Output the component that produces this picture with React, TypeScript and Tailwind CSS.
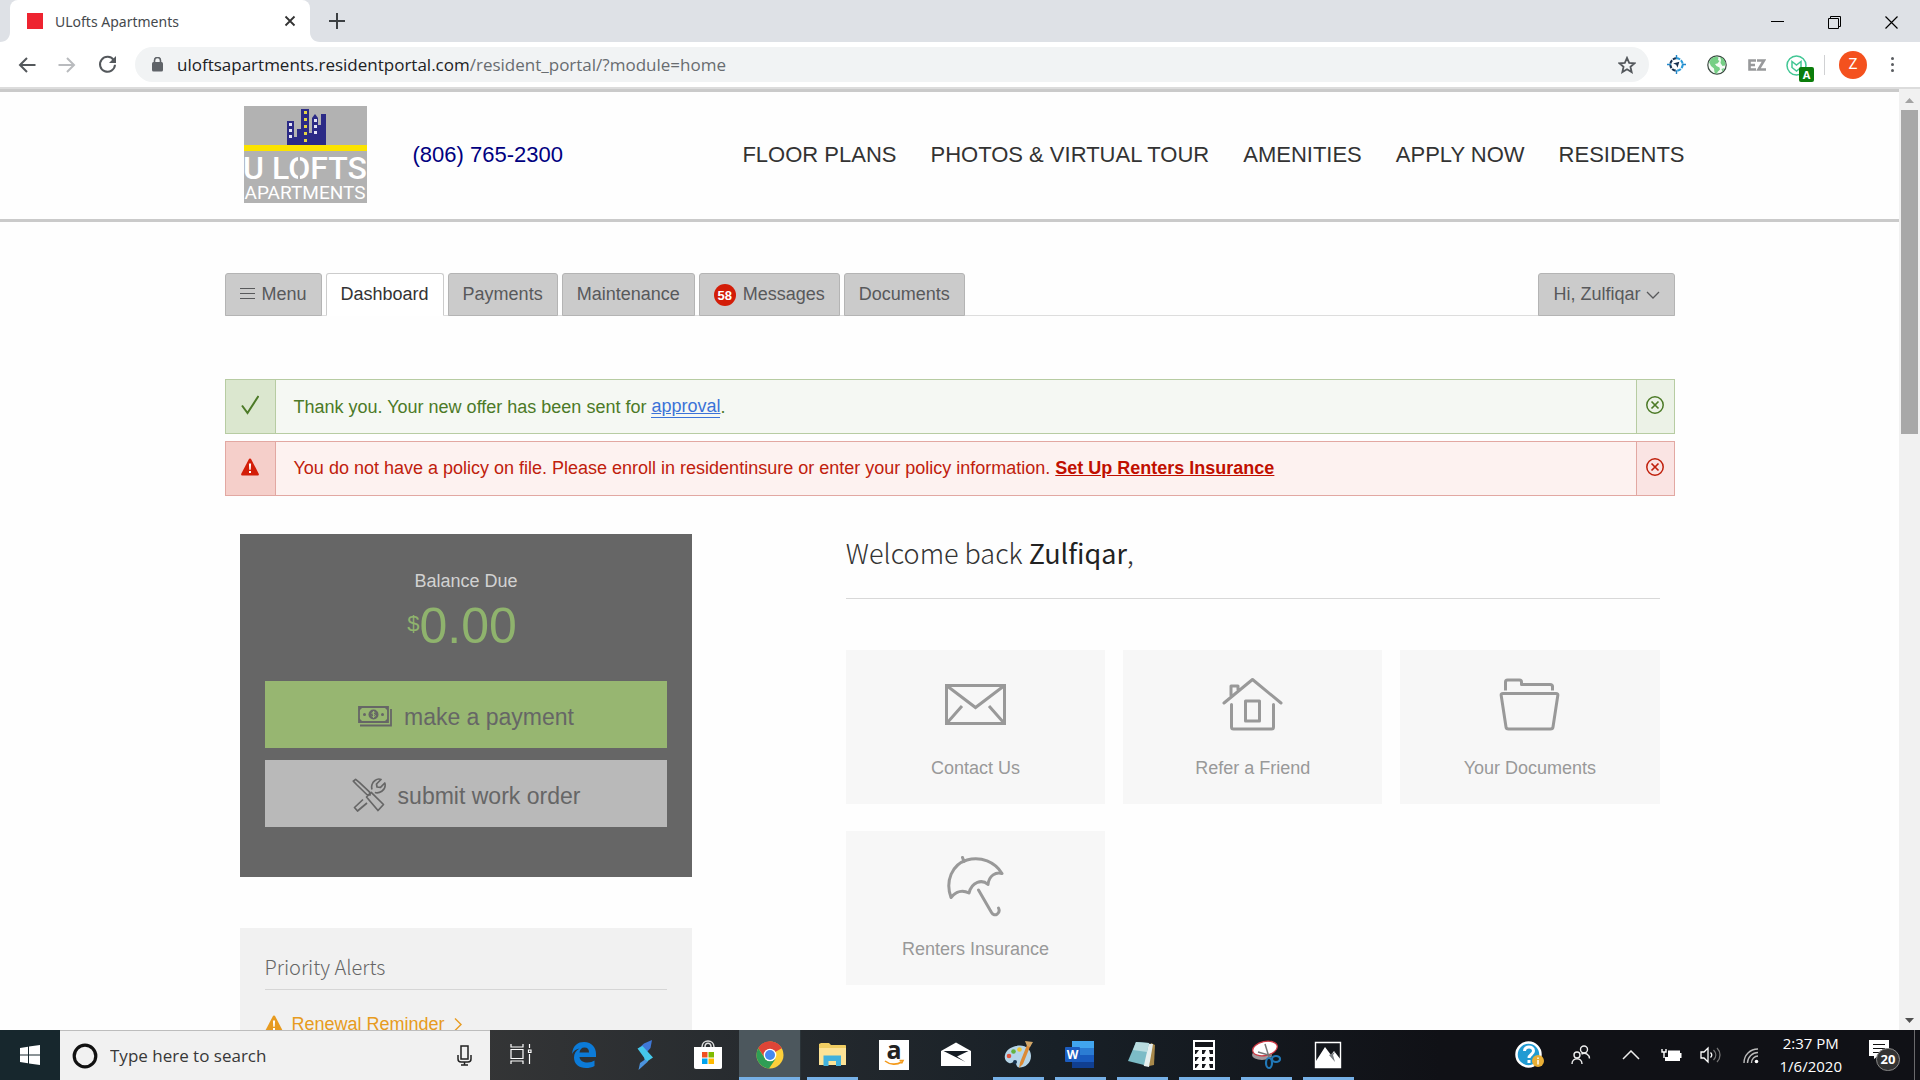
import React from "react";
import { clsx } from "clsx";

/* ---------- browser window ---------- */

function TabFoot({ flip }: { flip?: boolean }) {
  return (
    <svg width="10" height="10" viewBox="0 0 10 10" className={clsx("shrink-0", flip && "-scale-x-100")} aria-hidden="true">
      <path d="M10 0v10H0C6 10 10 6 10 0Z" fill="#fff" />
    </svg>
  );
}

function TabStrip() {
  return (
    <div className="flex h-[42px] shrink-0 items-end justify-between bg-[#dee1e6]">
      <div className="flex items-end">
        <TabFoot />
        <div className="flex h-[42px] w-[300px] items-center rounded-t-lg bg-white pl-[17px] pr-[11px]">
          <span className="h-4 w-4 bg-[#ee2430]" />
          <span className="ml-3 flex-1 whitespace-nowrap text-[14px] text-[#45494d]">ULofts Apartments</span>
          <button aria-label="Close tab" className="p-[3px] text-[#333]">
            <svg width="12" height="12" viewBox="0 0 12 12" stroke="currentColor" strokeWidth="1.8" aria-hidden="true">
              <path d="M1.5 1.5l9 9M10.5 1.5l-9 9" />
            </svg>
          </button>
        </div>
        <TabFoot flip />
        <button aria-label="New tab" className="ml-[9px] flex h-[42px] items-center text-[#3c4043]">
          <svg width="16" height="16" viewBox="0 0 16 16" stroke="currentColor" strokeWidth="2" aria-hidden="true">
            <path d="M8 0v16M0 8h16" />
          </svg>
        </button>
      </div>
      <div className="flex h-[36px] text-black">
        <button aria-label="Minimize" className="grid w-[57px] place-items-center pb-1">
          <svg width="13" height="14" stroke="currentColor" aria-hidden="true"><path d="M0 6.500h13" /></svg>
        </button>
        <button aria-label="Restore" className="grid w-[57px] place-items-center pb-1">
          <svg width="13" height="13" fill="none" stroke="currentColor" aria-hidden="true">
            <path d="M.5 2.500h10v10h-10zM2.500 2.500v-2h10v10h-2" />
          </svg>
        </button>
        <button aria-label="Close" className="grid w-[57px] place-items-center pb-1">
          <svg width="13" height="13" stroke="currentColor" strokeWidth="1.200" aria-hidden="true">
            <path d="M.5.5l12 12M12.500.5l-12 12" />
          </svg>
        </button>
      </div>
    </div>
  );
}

function Arrow({ flip }: { flip?: boolean }) {
  return (
    <svg width="18" height="16" viewBox="0 0 18 16" fill="none" stroke="currentColor" strokeWidth="2" className={clsx(flip && "-scale-x-100")} aria-hidden="true">
      <path d="M17.500 8H2M9 1L2 8l7 7" />
    </svg>
  );
}

function Toolbar() {
  return (
    <div className="flex h-[45px] shrink-0 items-center bg-white pl-[18px] text-[#54585c]">
      <button aria-label="Back"><Arrow /></button>
      <button aria-label="Forward" className="ml-[22px] text-[#b9bbbe]"><Arrow flip /></button>
      <button aria-label="Reload" className="ml-[22px]">
        <svg width="19" height="19" viewBox="0 0 19 19" fill="none" stroke="currentColor" strokeWidth="2" aria-hidden="true">
          <path d="M15.800 5.200A7.500 7.500 0 1 0 17 9.800" />
          <path d="M18 1v7h-7z" fill="currentColor" stroke="none" />
        </svg>
      </button>
      <div className="relative ml-[18px] flex h-[35px] flex-1 items-center rounded-full bg-[#f1f3f4] pl-[17px] pr-[13px]">
        <svg width="11" height="15" viewBox="0 0 11 15" aria-hidden="true">
          <rect y="5" width="11" height="9.500" rx="1.500" fill="#5f6368" />
          <path d="M2.500 6V3.500a3 3 0 0 1 6 0V6" fill="none" stroke="#5f6368" strokeWidth="1.600" />
        </svg>
        <span className="ml-[14px] flex-1 whitespace-nowrap font-['Open_Sans',sans-serif] text-[17px] text-[#202124]">
          uloftsapartments.residentportal.com<span className="text-[#686c70]">/resident_portal/?module=home</span>
        </span>
        <input aria-label="Address and search bar" className="absolute inset-0 rounded-full bg-transparent outline-none" />
        <svg width="18" height="18" viewBox="0 0 24 24" fill="none" stroke="currentColor" strokeWidth="2.400" aria-hidden="true">
          <path d="M12 2.500l2.900 6.600 7.100.6-5.400 4.700 1.600 7L12 17.700l-6.200 3.700 1.600-7L2 9.700l7.100-.6z" />
        </svg>
      </div>
      <div className="flex items-center">
        <svg width="19" height="19" viewBox="0 0 20 20" className="ml-[18px]" fill="none" strokeWidth="2.200" aria-hidden="true">
          <path d="M10 3.500a6.500 6.500 0 0 0 0 13" stroke="#17304f" strokeDasharray="4 1" />
          <path d="M10 3.500a6.500 6.500 0 0 1 0 13" stroke="#2a9bd8" strokeDasharray="4 1" />
          <path d="M10 0v4M10 16v4M16 10h4M0 10h4" stroke="#2187c9" strokeWidth="1.500" />
          <path d="M13 7l-2 6.500-1.300-3.200L6.500 9z" fill="#17304f" />
        </svg>
        <svg width="20" height="20" viewBox="0 0 20 20" className="ml-[21px]" aria-hidden="true">
          <circle cx="10" cy="10" r="9.200" fill="#f4fbf5" stroke="#3b4a42" strokeWidth="1.200" />
          <path d="M2 7L5 3l4-1.500 2.500 1-.5 2.500 1.500 1-2 2.500-2.500.5L9.500 11l3 1.500.5 2-2.500 2.500-.5 2-2.500-1.500-.5-4L4 11zM13 2l3 1.500 2.500 4-.5 3-2.500.5-2-3 .5-3zM14.500 14l3-1-2 4z" fill="#75cf85" />
        </svg>
        <svg width="18" height="12" viewBox="0 0 18 12" className="ml-[21px]" fill="none" stroke="#98999b" strokeWidth="2.600" aria-hidden="true">
          <path d="M8 1.500H1.500v9H8M1.500 6H7M9 1.500h7L10.500 10.500H18" />
        </svg>
        <div className="relative ml-[20px] h-[20px] w-[28px]">
          <svg width="22" height="22" viewBox="0 0 22 22" fill="none" stroke="#42c795" strokeWidth="1.500" aria-hidden="true">
            <circle cx="10.500" cy="10.500" r="9.500" />
            <path d="M6 6.500l4.500 3.500L15 6.500v6L10.500 16 6 12.500z" />
          </svg>
          <span className="absolute left-[13px] top-[12px] grid h-[15px] w-[15px] place-items-center rounded-[2px] bg-[#0b7d0b] text-[11px] font-bold leading-none text-white">A</span>
        </div>
        <span className="ml-[10px] h-[20px] w-px bg-[#d0d1d3]" />
        <button aria-label="Profile" className="ml-[14px] grid h-[28px] w-[28px] place-items-center rounded-full bg-[#f4511e] font-[Roboto] text-[15px] text-white">Z</button>
        <button aria-label="Browser menu" className="ml-[24px] mr-[26px] flex flex-col gap-[3px]">
          <span className="h-[3px] w-[3px] rounded-full bg-[#5a5d61]" />
          <span className="h-[3px] w-[3px] rounded-full bg-[#5a5d61]" />
          <span className="h-[3px] w-[3px] rounded-full bg-[#5a5d61]" />
        </button>
      </div>
    </div>
  );
}

function Scrollbar() {
  return (
    <div className="flex w-[21px] shrink-0 flex-col items-center bg-[#f1f1f1]">
      <svg width="21" height="21" aria-hidden="true"><path d="M6 14h9l-4.500-5z" fill="#a3a3a3" /></svg>
      <div className="h-[324px] w-[17px] bg-[#a8a8a8]" />
      <div className="flex-1" />
      <svg width="21" height="21" aria-hidden="true"><path d="M6 9h9l-4.500 5z" fill="#505050" /></svg>
    </div>
  );
}

/* ---------- resident portal ---------- */

function Logo() {
  return (
    <svg width="123" height="97" viewBox="0 0 123 97" role="img" aria-label="U Lofts Apartments">
      <rect width="123" height="97" fill="#b2b2b2" />
      <path d="M43 40V15h7v16h3v-8h4V3h8v24h3V12l3-4 3 4v7h3V8h5v32z" fill="#2b2a86" />
      <path d="M45 17h3v3h-3zm0 6h3v3h-3zm0 6h3v3h-3zM70 13h3v3h-3zm0 6h3v3h-3zm0 6h3v3h-3z" fill="#e4e4f6" />
      <path d="M60 5h3v3h-3zm0 7h3v3h-3zm0 7h3v3h-3zm0 7h3v3h-3zm0 7h3v3h-3z" fill="#e5d545" />
      <rect y="39" width="123" height="6" fill="#fbe300" />
      <text x="61" y="73" textAnchor="middle" fill="#fff" className="font-[Roboto] text-[32px] font-medium">U LOFTS</text>
      <path d="M55 48v27" stroke="#b2b2b2" strokeWidth="2" />
      <text x="61" y="93" textAnchor="middle" fill="#fff" className="font-[Roboto] text-[19px]">APARTMENTS</text>
    </svg>
  );
}

const siteLinks = ["FLOOR PLANS", "PHOTOS & VIRTUAL TOUR", "AMENITIES", "APPLY NOW", "RESIDENTS"];

function SiteHeader() {
  return (
    <header className="border-y-[3px] border-[#cacaca]">
      <div className="mx-auto flex h-[127px] max-w-[1470px] items-center pb-[2px]">
        <a href="#home" className="ml-[29px]"><Logo /></a>
        <a href="tel:8067652300" className="ml-[46px] text-[22px] text-[#000080]">(806) 765-2300</a>
        <nav className="ml-auto flex gap-[34px] text-[22px] text-[#333]">
          {siteLinks.map((l) => (
            <a key={l} href="#site" className="whitespace-nowrap">{l}</a>
          ))}
        </nav>
      </div>
    </header>
  );
}

function PortalTab({ children, active }: { children: React.ReactNode; active?: boolean }) {
  return (
    <a
      href="#tab"
      className={clsx(
        "-mb-px flex h-[43px] items-center whitespace-nowrap rounded-t-[3px] border px-[14px] pb-[2px]",
        active ? "border-[#ccc] border-b-white bg-white text-[#333]" : "border-[#b4b4b4] bg-[#cbcbcb] text-[#58595b]",
      )}
    >
      {children}
    </a>
  );
}

function PortalNav() {
  return (
    <nav className="flex items-end gap-1 border-b border-[#ddd] text-lg">
      <PortalTab>
        <svg width="15" height="11" className="mr-[7px]" stroke="currentColor" aria-hidden="true">
          <path d="M0 .5h15M0 5.500h15M0 10.500h15" />
        </svg>
        Menu
      </PortalTab>
      <PortalTab active>Dashboard</PortalTab>
      <PortalTab>Payments</PortalTab>
      <PortalTab>Maintenance</PortalTab>
      <PortalTab>
        <span className="mr-[7px] mt-[3px] grid h-[22px] w-[22px] place-items-center rounded-full bg-[#d31d08] text-[13px] font-bold leading-none text-white">58</span>
        Messages
      </PortalTab>
      <PortalTab>Documents</PortalTab>
      <span className="flex-1" />
      <PortalTab>
        Hi, Zulfiqar
        <svg width="14" height="8" className="ml-[5px] mt-[2px]" fill="none" stroke="currentColor" strokeWidth="1.300" aria-hidden="true">
          <path d="M1 1l6 6 6-6" />
        </svg>
      </PortalTab>
    </nav>
  );
}

function CloseCircle() {
  return (
    <svg width="18" height="18" viewBox="0 0 18 18" fill="none" stroke="currentColor" strokeWidth="1.500" className="-mt-[4px]" aria-hidden="true">
      <circle cx="9" cy="9" r="8.200" />
      <path d="M5.500 5.500l7 7M12.500 5.500l-7 7" strokeWidth="1.700" />
    </svg>
  );
}

function Warning({ size }: { size: number }) {
  return (
    <svg width={size} height={size} viewBox="0 0 18 18" aria-hidden="true">
      <path d="M9 .5c.7 0 1 .4 1.300.9l7.300 14.100c.6 1.200.1 2-1.100 2h-15c-1.200 0-1.700-.8-1.100-2L7.700 1.400C8 .9 8.300.5 9 .5Z" fill="currentColor" />
      <path d="M7.900 5.500h2.200l-.4 6.300H8.300zM8 13h2v2H8z" fill="#fff" />
    </svg>
  );
}

function Notices() {
  return (
    <div className="mt-[63px] flex flex-col gap-[7px] text-lg">
      <div className="flex h-[55px] border border-[#b7cca2] bg-[#f5f8f3] text-[#4c7a27]">
        <div className="grid w-[50px] place-items-center border-r border-[#b7cca2] bg-[#dbe7cf] pb-[3px]">
          <svg width="18" height="20" viewBox="0 0 18 20" fill="none" stroke="currentColor" strokeWidth="2" aria-hidden="true">
            <path d="M1 10.500l5.500 7.500L17.500 1" />
          </svg>
        </div>
        <p className="flex flex-1 items-center whitespace-pre px-[18px]">
          Thank you. Your new offer has been sent for{" "}
          <a href="#approval" className="border-b border-[#3b73d8] leading-[21px] text-[#3b73d8] underline">approval</a>.
        </p>
        <button aria-label="Dismiss confirmation" className="grid w-[38px] place-items-center border-l border-[#b7cca2] bg-[#ecf2e7]"><CloseCircle /></button>
      </div>
      <div className="flex h-[55px] border border-[#e2a8a2] bg-[#fdf2f0] text-[#c0200c]">
        <div className="grid w-[50px] place-items-center border-r border-[#e2a8a2] bg-[#f5cfca] pb-[3px] text-[#d31d08]"><Warning size={18} /></div>
        <p className="flex flex-1 items-center whitespace-pre px-[18px] pb-[2px]">
          You do not have a policy on file. Please enroll in residentinsure or enter your policy information.{" "}
          <a href="#insurance" className="font-bold text-[#c00f00] underline">Set Up Renters Insurance</a>
        </p>
        <button aria-label="Dismiss warning" className="grid w-[38px] place-items-center border-l border-[#e2a8a2] bg-[#fae4e3]"><CloseCircle /></button>
      </div>
    </div>
  );
}

function BalanceCard() {
  return (
    <section className="flex flex-col bg-[#666] px-[25px] pb-[50px] pt-[33px]">
      <h2 className="text-center text-lg leading-[28px] text-[#d2d2d2]">Balance Due</h2>
      <p className="mr-2 flex justify-center text-[#8fb36d]">
        <span className="text-[22px] leading-[57px]">$</span>
        <span className="text-[50px] leading-[63px]">0.00</span>
      </p>
      <button className="mt-[23px] flex h-[67px] items-center justify-center gap-3 bg-[#97b671] pt-[3px] text-[23px] text-[#666]">
        <svg width="34" height="21" viewBox="0 0 34 21" aria-hidden="true">
          <path d="M1 1h29v15H1z" fill="none" stroke="currentColor" strokeWidth="1.800" />
          <path d="M33 3v16.500H2" fill="none" stroke="currentColor" strokeWidth="1.800" />
          <path d="M1 1h4L1 5zM30 1h-4l4 4zM1 16h4l-4-4zM30 16h-4l4-4z" fill="currentColor" />
          <circle cx="15.500" cy="8.500" r="5" fill="currentColor" />
          <circle cx="6.500" cy="8.500" r="1.500" fill="currentColor" />
          <circle cx="24.500" cy="8.500" r="1.500" fill="currentColor" />
          <path d="M17.300 6.800c-.6-1-3.400-1-3.400.4 0 1.600 3.500.8 3.500 2.500 0 1.500-3 1.400-3.700.3M15.500 5v7" fill="none" stroke="#97b671" />
        </svg>
        <span className="pt-[2px]">make a payment</span>
      </button>
      <button className="mt-3 flex h-[67px] items-center justify-center gap-3 bg-[#b9b9b9] pt-[3px] text-[23px] text-[#666]">
        <svg width="34" height="34" viewBox="0 0 34 34" fill="none" stroke="currentColor" strokeWidth="1.700" strokeLinejoin="round" aria-hidden="true">
          <path d="M1.300 3.200l2.300-1.900 4 3.300 9.800 9.300.7 3.100-3.300-.5L5 7z" />
          <path d="M14.500 19l4.700-4.700L31.500 26.500 26 32.500z" />
          <path d="M11 21.500l-8.500 8 3 3.500 9.500-8M20 11.500c-1-3 0-7 3-9 2-1.500 4-2 6-1l-4.500 4.500.5 3 3.500.3L32.800 5c1 3-.3 6.500-3 8.300-2.300 1.500-4.800 1.900-7 1.200" />
        </svg>
        <span className="pt-[2px]">submit work order</span>
      </button>
    </section>
  );
}

function PriorityAlerts() {
  return (
    <section className="mt-[51px] h-[200px] bg-[#f1f1f1] px-[25px] pt-[21px]">
      <h2 className="border-b border-[#d6d6d6] pb-[5px] font-['Noto_Sans_CJK_SC',sans-serif] text-[20px] font-light leading-[35px] text-[#666]">Priority Alerts</h2>
      <a href="#renewal" className="mt-[22px] flex items-center text-lg leading-[24px] text-[#e79b20]">
        <Warning size={18} />
        <span className="ml-[9px]">Renewal Reminder</span>
        <svg width="8" height="13" viewBox="0 0 8 13" className="ml-[9px]" fill="none" stroke="currentColor" strokeWidth="1.400" aria-hidden="true">
          <path d="M1 .5l6 6-6 6" />
        </svg>
      </a>
    </section>
  );
}

const tiles: { label: string; icon: React.ReactNode }[] = [
  {
    label: "Contact Us",
    icon: <path d="M1.500 10.500h58v38h-58zM1.500 10.500l29 22 29-22M2 48l15-17M59 48L44 31" />,
  },
  {
    label: "Refer a Friend",
    icon: (
      <path
        strokeLinejoin="round"
        strokeLinecap="round"
        d="M2 28L30.500 4.500 59 28M9 20.500V11h7V14.500M9.500 29.500V52c0 1.500.5 2 2 2h38c1.500 0 2-.5 2-2V29.500M23.500 26h14v20h-14z"
      />
    ),
  },
  {
    label: "Your Documents",
    icon: (
      <path
        strokeLinejoin="round"
        d="M6.500 15.500V7c0-1.500.5-2 2-2h12c1.500 0 2 .5 2 2V9.500H51c1.500 0 2.500.5 2.500 2v4M4 18.500h53c1.500 0 2 .8 1.800 2L54 52c-.2 1.500-1 2-2.500 2H9.500c-1.500 0-2.300-.5-2.500-2L2.200 20.500c-.2-1.200.3-2 1.800-2Z"
      />
    ),
  },
  {
    label: "Renters Insurance",
    icon: (
      <path
        strokeLinejoin="round"
        strokeLinecap="round"
        d="M17.500 1.500l1.500 4M6 41.500C0 25 7 8.500 22 4c14-4 28 2 35 13.500-6-2-13 2-14 11-6-5.500-16-3-19 8.500-6-3-13-2-18 4.500ZM33.500 34l13 22.500c3 5 9.500 1 7-4.500"
      />
    ),
  },
];

function Welcome() {
  return (
    <section className="w-[57.3%]">
      <h1 className="-mt-[3px] border-b border-[#d8d8d8] pb-[24px] font-['Noto_Sans_CJK_SC',sans-serif] text-[27px] font-light leading-[43px] text-[#333]">
        Welcome back <span className="font-normal text-[#222]">Zulfiqar</span>,
      </h1>
      <div className="mt-[51px] grid grid-cols-3 gap-x-[18px] gap-y-[27px]">
        {tiles.map((t) => (
          <a key={t.label} href="#tile" className="flex h-[154px] flex-col items-center bg-[#f7f7f7] pt-[25px] text-lg text-[#999]">
            <svg width="61" height="61" viewBox="0 0 61 61" fill="none" stroke="currentColor" strokeWidth="3" aria-hidden="true">{t.icon}</svg>
            <span className="mt-[18px]">{t.label}</span>
          </a>
        ))}
      </div>
    </section>
  );
}

/* ---------- taskbar ---------- */

const apps: { name: string; state: "none" | "open" | "active"; icon: React.ReactNode }[] = [
  {
    name: "Task View",
    state: "none",
    icon: <path d="M4 9.500h12v9H4zM4 4v3h12V4M4 24v-3h12v3M22.500 4v4M22.500 14v10M21.500 10h2.500v2.500h-2.500z" fill="none" stroke="#fff" strokeWidth="1.200" />,
  },
  {
    name: "Edge",
    state: "none",
    icon: <path d="M3 14C4 5 9 2 15 2c8 0 12 6 12 12v3H10.500c.5 4 4 5.500 8 5.500 3 0 5-.8 7-2v5.500c-2.500 1.500-5.500 2-8.500 2-7 0-12-4-12-10.500 0-4 2-7 5.500-9C7 9 4.500 11 3 14Zm7.500-1.500H20c0-3.500-1.500-5-4.500-5s-4.600 2-5 5Z" fill="#0c7bd8" />,
  },
  {
    name: "Streams",
    state: "none",
    icon: (
      <>
        <path d="M21 0l-1.500 8-3.500 4-8-4 5-4.500z" fill="#3f78d8" />
        <path d="M6.500 8.500l5-2.500L22 17.500l-7.500 5-1.500-5z" fill="#45c8ea" />
        <path d="M7.500 30L9 23l5-3.500 3 2z" fill="#4c93de" />
      </>
    ),
  },
  {
    name: "Store",
    state: "none",
    icon: (
      <>
        <path d="M9 7c0-8 12-8 12 0M12 7c0-5 6-5 6 0" fill="none" stroke="#ddd" strokeWidth="1.500" />
        <path d="M1 7h28v20c0 1-.5 2-2 2H3c-1.500 0-2-1-2-2z" fill="#fff" />
        <path d="M9 12h5.500v5.500H9z" fill="#f05022" />
        <path d="M15.500 12H21v5.500h-5.500z" fill="#7fba00" />
        <path d="M9 18.500h5.500V24H9z" fill="#00a4ef" />
        <path d="M15.500 18.500H21V24h-5.500z" fill="#ffb900" />
      </>
    ),
  },
  {
    name: "Chrome",
    state: "active",
    icon: (
      <>
        <circle cx="15" cy="15" r="13.500" fill="#fdcf3a" />
        <path d="M15 15L3.300 8.200A13.500 13.500 0 0 1 26.700 8.200z" fill="#de4537" />
        <path d="M15 8.200h11.700A13.500 13.500 0 0 0 3.300 8.200l6 9z" fill="#de4537" />
        <path d="M3.300 8.200A13.500 13.500 0 0 0 14 28.500l6.500-9.500-9.500 1z" fill="#2f9e55" />
        <circle cx="15" cy="15" r="6.300" fill="#fff" />
        <circle cx="15" cy="15" r="5" fill="#4688f0" />
      </>
    ),
  },
  {
    name: "File Explorer",
    state: "open",
    icon: (
      <>
        <path d="M2 4l2-1h8l2 2h14c.6 0 1 .4 1 1v19H2z" fill="#f0cd62" />
        <path d="M2 8h27v17H2z" fill="#fde396" />
        <path d="M6.500 26V15.500h17.500V26h-5v-5h-7.500v5z" fill="#41b1dd" />
      </>
    ),
  },
  {
    name: "Amazon",
    state: "none",
    icon: (
      <>
        <path d="M0 0h30v30H0z" fill="#fff" />
        <text x="15" y="19" textAnchor="middle" fill="#222" className="font-['Open_Sans'] text-[25px] font-bold">a</text>
        <path d="M6 21c5 4 12 4 16.500 1M20.500 20.500h3.500l-1.500 3" fill="none" stroke="#f49a1a" strokeWidth="1.600" />
      </>
    ),
  },
  {
    name: "Mail",
    state: "none",
    icon: (
      <>
        <path d="M0 11L15 2.500 30 11v15H0z" fill="#fff" />
        <path d="M2.500 11h25L16 16.500l8.500 5.500z" fill="#141b23" />
      </>
    ),
  },
  {
    name: "Paint",
    state: "open",
    icon: (
      <>
        <path d="M13 6c9-2 15 3 15 10 0 8-7 12-12 11.500-3-.5-2-3.500-4-5s-3 1.500-6 .5c-3-1-5-4-4-8 1-5 6-8 11-9Z" fill="#b5d5e8" />
        <circle cx="6" cy="16" r="2.300" fill="#e0533c" />
        <circle cx="10.500" cy="11.500" r="2.300" fill="#63b23e" />
        <circle cx="16.500" cy="9.500" r="2.300" fill="#efc430" />
        <circle cx="12" cy="22" r="2" fill="#17324d" />
        <path d="M28.500 3L20 24l-4 4 1-5.500L24 5z" fill="#dc8a35" />
        <path d="M22 1l8 1-3 5-3-1z" fill="#d1a668" />
      </>
    ),
  },
  {
    name: "Word",
    state: "open",
    icon: (
      <>
        <path d="M7 1h22v7H7z" fill="#41a5ee" />
        <path d="M7 8h22v7H7z" fill="#2b7cd3" />
        <path d="M7 15h22v7H7z" fill="#185abd" />
        <path d="M7 22h22v6H7z" fill="#103f91" />
        <rect y="7" width="15" height="15" rx="1" fill="#1b5cbf" />
        <text x="7.500" y="19" textAnchor="middle" fill="#fff" className="font-['Open_Sans'] text-[12px] font-bold">W</text>
      </>
    ),
  },
  {
    name: "Notepad",
    state: "open",
    icon: (
      <>
        <path d="M24 3l4 2-1 20-5 1z" fill="#a8884a" />
        <path d="M10 3l16 1-4 23-5-1z" fill="#e6efef" />
        <path d="M9 2l13 1-5 22L1 21z" fill="#7cbcc7" />
        <path d="M9 2l13 1-2 9L6 10z" fill="#b9dce0" />
      </>
    ),
  },
  {
    name: "Calculator",
    state: "open",
    icon: (
      <>
        <path d="M4 0h22v30H4z" fill="#fff" />
        <path d="M6 2h18v5H6zM6 10h4l-3 4H6zM13 10h4l-2 4h-2zM20 10h4v4h-3zM6 17h4l-3 4H6zM13 17h4l-2 4h-2zM20 17h4v4h-3zM6 24h4l-3 4H6zM13 24h4l-2 4h-2zM20 24h4v4h-3z" fill="#15161b" />
      </>
    ),
  },
  {
    name: "Snipping Tool",
    state: "open",
    icon: (
      <>
        <ellipse cx="11" cy="15" rx="10" ry="5" fill="#a1999c" />
        <ellipse cx="14" cy="8.500" rx="12.500" ry="7" fill="#fff" stroke="#cf3b46" strokeWidth="1.300" transform="rotate(-12 14 8.500)" />
        <path d="M14 4l4 13M7 12l14 4" stroke="#777" strokeWidth="1.500" />
        <ellipse cx="18" cy="23" rx="3" ry="5" fill="none" stroke="#2179b9" strokeWidth="2.200" />
        <ellipse cx="25" cy="19" rx="4" ry="3" fill="none" stroke="#2179b9" strokeWidth="2.200" />
      </>
    ),
  },
  {
    name: "Photos",
    state: "open",
    icon: (
      <>
        <path d="M2.500 2.500h25v25h-25z" fill="none" stroke="#fff" strokeWidth="1.400" />
        <path d="M3 21l9-14 6 8 3-4 7 9v7H3z" fill="#fff" />
        <path d="M16 15l6 7-2-7 2-3z" fill="#777b80" />
      </>
    ),
  },
];

function Taskbar() {
  return (
    <footer className="flex h-[50px] shrink-0 items-stretch bg-linear-to-r from-[#343536] from-25% via-[#182027] via-55% to-[#101116] to-75% text-white">
      <button aria-label="Start" className="grid w-[60px] place-items-center bg-[#17272d]">
        <svg width="20" height="20" fill="#fff" aria-hidden="true">
          <path d="M0 3l8-1.200V9.500H0zM9 1.600L20 0v9.500H9zM0 10.500h8v7.700L0 17zM9 10.500h11V20L9 18.400z" />
        </svg>
      </button>
      <label className="mr-px flex w-[430px] items-center border-t border-[#bdbdbd] bg-[#f1f1f1] pl-[12px] pr-[18px]">
        <svg width="26" height="26" aria-hidden="true"><circle cx="13" cy="13" r="10.800" fill="none" stroke="#111" strokeWidth="3.200" /></svg>
        <input type="text" aria-label="Search Windows" placeholder="Type here to search" className="ml-[12px] min-w-0 flex-1 bg-transparent font-['Open_Sans',sans-serif] text-[17px] text-[#333] outline-none placeholder:text-[#383838]" />
        <svg width="15" height="21" viewBox="0 0 15 21" fill="none" stroke="#222" strokeWidth="1.500" aria-hidden="true">
          <path d="M4 1h7v13H4zM1 10v4c0 2 1 3 3 3h7c2 0 3-1 3-3v-4M7.500 17v3M4 20h7" />
        </svg>
      </label>
      {apps.map((a) => (
        <button
          key={a.name}
          aria-label={a.name}
          className={clsx(
            "flex w-[62px] flex-col items-center justify-end",
            a.state === "active" && "border-r border-[#2a3338] bg-[#4c575d]",
          )}
        >
          <svg width="30" height="30" viewBox="0 0 30 30" className="mb-[7px] overflow-visible" aria-hidden="true">{a.icon}</svg>
          <span className={clsx("h-[3px]", a.state === "active" && "w-full bg-[#76b0e6]", a.state === "open" && "w-[51px] bg-[#76b0e6]")} />
        </button>
      ))}
      <div className="ml-auto flex items-center">
        <svg width="30" height="28" viewBox="0 0 30 28" aria-label="Help" role="img">
          <circle cx="13.500" cy="13.500" r="12" fill="#219bd3" stroke="#fff" strokeWidth="2.500" />
          <path d="M9.500 10c0-5.500 9-5.500 9 0 0 3.500-4.500 3.500-4.500 7M14 19v3" fill="none" stroke="#fff" strokeWidth="3" />
          <circle cx="23" cy="20" r="6" fill="#e8ae35" />
          <path d="M23 16.500v1.500M23 19v4.500" stroke="#fff" strokeWidth="1.500" />
        </svg>
        <svg width="20" height="20" viewBox="0 0 20 20" className="ml-[26px]" fill="none" stroke="#eee" strokeWidth="1.400" aria-label="People" role="img">
          <circle cx="13" cy="4.500" r="3.500" />
          <circle cx="6" cy="10" r="3" />
          <path d="M1 19c0-7 10-7 10 0M10.500 9c4-2 8 1 8 4.500" />
        </svg>
        <svg width="18" height="10" viewBox="0 0 18 10" className="ml-[31px]" fill="none" stroke="#eee" strokeWidth="1.500" aria-label="Show hidden icons" role="img">
          <path d="M1 9l8-8 8 8" />
        </svg>
        <svg width="21" height="14" viewBox="0 0 21 14" className="ml-[21px]" aria-label="Battery" role="img">
          <path d="M1 1v3h4V1M3 4v6" fill="none" stroke="#fff" strokeWidth="1.400" />
          <path d="M7 2.500h12v2.500h1.500v5H19v3H4v-4h3z" fill="#fff" />
        </svg>
        <svg width="21" height="18" viewBox="0 0 21 18" className="ml-[18px]" fill="none" stroke="#fff" strokeWidth="1.300" aria-label="Volume" role="img">
          <path d="M1 6h3l4-4v14l-4-4H1z" />
          <path d="M10.500 6.500c1.500 1.500 1.500 3.500 0 5" />
          <path d="M13.500 4c3 3 3 7 0 10M17 2c4 4 4 10 0 14" stroke="#777" />
        </svg>
        <svg width="16" height="17" viewBox="0 0 16 17" className="ml-[22px]" fill="none" stroke="#bbb" strokeWidth="1.400" aria-label="Wi-Fi" role="img">
          <path d="M1 16C1 8 7 2 15 2M4.500 16c0-6 5-10.500 10.500-10.500M8.500 16c0-4 3-7 6.500-7" />
          <circle cx="13.500" cy="14.500" r="1.800" fill="#fff" stroke="none" />
        </svg>
        <div className="ml-[21px] text-center font-['Open_Sans',sans-serif] text-[15px] leading-[23px]">
          <div>2:37 PM</div>
          <div>1/6/2020</div>
        </div>
        <div className="relative ml-[27px] mr-[14px] h-[30px] w-[31px]">
          <svg width="20" height="20" viewBox="0 0 20 20" aria-label="Notifications" role="img">
            <path d="M0 0h20v16H9l-4 3v-3H0z" fill="#fff" />
            <path d="M4 4.500h12M4 8.500h12M4 12.500h8" stroke="#111" strokeWidth="1.200" />
          </svg>
          <span className="absolute left-[7px] top-[8px] grid h-[23px] w-[24px] place-items-center rounded-full border border-[#888] bg-[#333] text-[13px] font-bold leading-none">20</span>
        </div>
        <span className="mr-[5px] h-[50px] w-px bg-[#6a6a6c]" />
      </div>
    </footer>
  );
}

export default function App() {
  return (
    <div className="flex h-screen flex-col overflow-hidden bg-white font-['Noto_Sans',sans-serif]">
      <TabStrip />
      <Toolbar />
      <div className="flex min-h-0 flex-1 border-t-2 border-[#dcdcdc]">
        <main className="min-w-0 flex-1 overflow-hidden bg-[#fefefe] font-['Liberation_Sans',Arial,sans-serif]">
          <SiteHeader />
          <div className="mx-auto max-w-[1450px] pt-[51px]">
            <PortalNav />
            <Notices />
            <div className="mt-[38px] flex justify-between px-[15px]">
              <div className="w-[31.9%]">
                <BalanceCard />
                <PriorityAlerts />
              </div>
              <Welcome />
            </div>
          </div>
        </main>
        <Scrollbar />
      </div>
      <Taskbar />
    </div>
  );
}
